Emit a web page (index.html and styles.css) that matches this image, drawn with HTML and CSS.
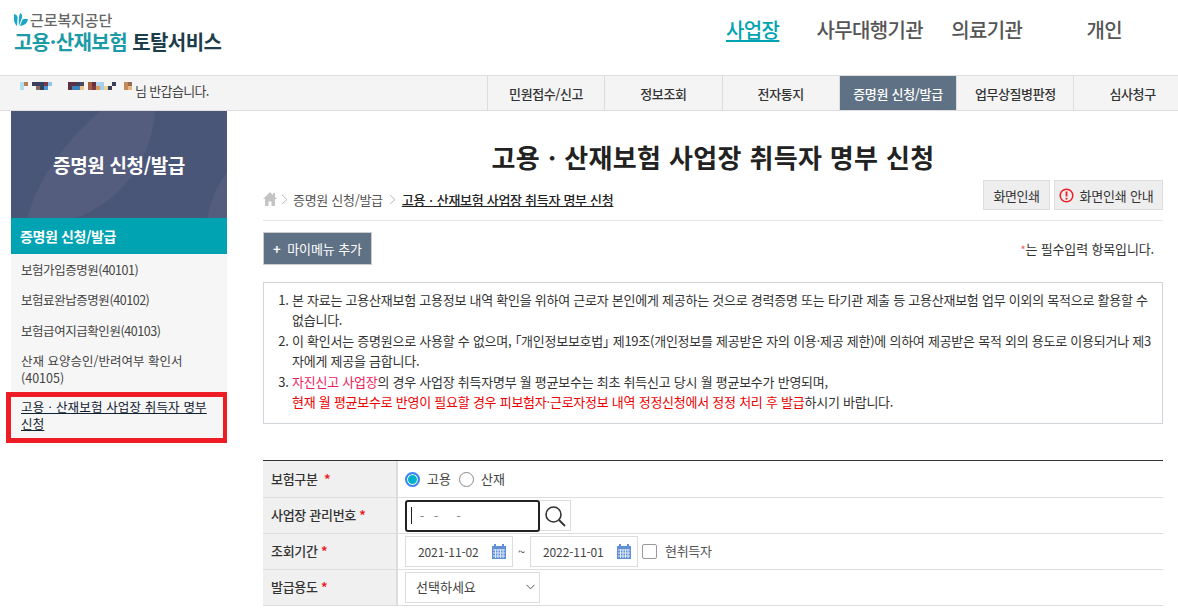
FILE: index.html
```html
<!DOCTYPE html>
<html lang="ko">
<head>
<meta charset="utf-8">
<title>고용·산재보험 토탈서비스</title>
<link rel="stylesheet" href="styles.css">
</head>
<body>
<header class="top">
  <div class="logo">
    <div class="logo-org">
      <svg class="logo-mark" width="14" height="14" viewBox="0 0 14 14"><path d="M0 1c3 .5 4 2.500 3.500 5.500L3 13C1 11 0 9 0 6z" fill="#1aa5c6"/><path d="M6 0c1.800.8 2.500 2.500 2 4.500L5 13C4.500 8 4.800 4 6 0z" fill="#1aa5c6"/><path d="M8.500 6.500c2-1 4-1 5.500-.3C13.500 10 10 12.500 6 13z" fill="#1aa5c6"/></svg>
      <span>근로복지공단</span>
    </div>
    <div class="logo-name"><span class="logo-teal">고용·산재보험</span> 토탈서비스</div>
  </div>
  <nav class="main-nav">
    <a class="nav-a active">사업장</a>
    <a class="nav-b">사무대행기관</a>
    <a class="nav-c">의료기관</a>
    <a class="nav-d">개인</a>
  </nav>
</header>
<div class="bar">
  <div class="greet">
    <svg class="mosaic" width="114" height="12" viewBox="0 0 114 12" shape-rendering="crispEdges"><rect x="0" y="0" width="4" height="8" fill="#b0def2"/><rect x="4" y="0" width="4" height="4" fill="#b87f52"/><rect x="12" y="0" width="8" height="4" fill="#3c3f5c"/><rect x="16" y="4" width="4" height="4" fill="#8c6a55"/><rect x="20" y="0" width="4" height="8" fill="#2f4463"/><rect x="24" y="0" width="4" height="4" fill="#7a3a48"/><rect x="24" y="4" width="4" height="4" fill="#4e97d6"/><rect x="28" y="0" width="4" height="4" fill="#8ec7ec"/><rect x="48" y="0" width="4" height="8" fill="#5c2f44"/><rect x="52" y="0" width="4" height="4" fill="#5c2f44"/><rect x="52" y="4" width="8" height="4" fill="#3b80bf"/><rect x="56" y="0" width="4" height="4" fill="#3c3f5c"/><rect x="60" y="0" width="4" height="4" fill="#4a4a60"/><rect x="60" y="4" width="4" height="4" fill="#eec48a"/><rect x="68" y="0" width="4" height="8" fill="#a65f3e"/><rect x="72" y="0" width="4" height="4" fill="#6a2e3e"/><rect x="72" y="4" width="4" height="4" fill="#7a3a48"/><rect x="76" y="0" width="4" height="4" fill="#b0d8ee"/><rect x="76" y="4" width="4" height="4" fill="#d89a60"/><rect x="80" y="0" width="4" height="8" fill="#a8cfe8"/><rect x="84" y="4" width="4" height="4" fill="#efcf9a"/><rect x="88" y="4" width="4" height="4" fill="#3c3f5c"/><rect x="92" y="0" width="4" height="4" fill="#3c3f5c"/><rect x="104" y="0" width="4" height="8" fill="#c58a5a"/><rect x="108" y="0" width="4" height="4" fill="#9a6a4a"/><rect x="108" y="4" width="4" height="4" fill="#e6b880"/></svg>
    <span class="greet-text">님 반갑습니다.</span>
  </div>
  <nav class="tabs">
    <a class="tab">민원접수/신고</a>
    <a class="tab">정보조회</a>
    <a class="tab">전자통지</a>
    <a class="tab tab-on">증명원 신청/발급</a>
    <a class="tab">업무상질병판정</a>
    <a class="tab">심사청구</a>
  </nav>
</div>
<div class="layout">
  <aside class="side">
    <div class="side-head">
      <svg class="side-art" width="216" height="107" viewBox="0 0 216 107"><path d="M16 107C30 60 60 25 90 0h54c-4 50-34 90-79 107z" fill="#555d7e"/><path d="M196 107c4-17 9-32 20-45v45z" fill="#555d7e"/></svg>
      <span class="side-head-text">증명원 신청/발급</span>
    </div>
    <div class="side-sub">증명원 신청/발급</div>
    <ul class="side-list">
      <li class="side-item">보험가입증명원(40101)</li>
      <li class="side-item">보험료완납증명원(40102)</li>
      <li class="side-item">보험급여지급확인원(40103)</li>
      <li class="side-item side-two">산재 요양승인/반려여부 확인서(40105)</li>
      <li class="side-item side-current"><a>고용ㆍ산재보험 사업장 취득자 명부 신청</a></li>
    </ul>
  </aside>
  <main class="main">
    <h1 class="title">고용ㆍ산재보험 사업장 취득자 명부 신청</h1>
    <div class="crumb-row">
      <div class="crumb">
        <svg width="14" height="14" viewBox="0 0 14 14"><path d="M7 0 0 7h2v7h3.500V9.500h3V14H12V7h2l-2-2V1h-2v2z" fill="#c4c4c4"/></svg>
        <svg class="chev" width="7" height="11" viewBox="0 0 7 11"><path d="M1 1l5 4.500L1 10" fill="none" stroke="#bbb" stroke-width="1"/></svg>
        <span class="crumb-mid">증명원 신청/발급</span>
        <svg class="chev chev2" width="7" height="11" viewBox="0 0 7 11"><path d="M1 1l5 4.500L1 10" fill="none" stroke="#bbb" stroke-width="1"/></svg>
        <span class="crumb-now">고용ㆍ산재보험 사업장 취득자 명부 신청</span>
      </div>
      <div class="print-btns">
        <button class="btn-print">화면인쇄</button>
        <button class="btn-print btn-guide">
          <svg width="15" height="15" viewBox="0 0 15 15"><circle cx="7.500" cy="7.500" r="6.300" fill="none" stroke="#ee1c25" stroke-width="1.500"/><path d="M7.500 3.500v5" stroke="#ee1c25" stroke-width="1.800"/><circle cx="7.500" cy="10.800" r="1" fill="#ee1c25"/></svg>
          화면인쇄 안내
        </button>
      </div>
    </div>
    <div class="tool-row">
      <button class="btn-my"><span class="plus">+</span> 마이메뉴 추가</button>
      <p class="req"><span class="req-star">*</span>는 필수입력 항목입니다.</p>
    </div>
    <ol class="notice">
      <li>본 자료는 고용산재보험 고용정보 내역 확인을 위하여 근로자 본인에게 제공하는 것으로 경력증명 또는 타기관 제출 등 고용산재보험 업무 이외의 목적으로 활용할 수 없습니다.</li>
      <li>이 확인서는 증명원으로 사용할 수 없으며, <span class="law">「개인정보보호법」</span> 제19조(개인정보를 제공받은 자의 이용·제공 제한)에 의하여 제공받은 목적 외의 용도로 이용되거나 제3<br>자에게 제공을 금합니다.</li>
      <li><span class="pink">자진신고 사업장</span>의 경우 사업장 취득자명부 월 평균보수는 최초 취득신고 당시 월 평균보수가 반영되며,<br><span class="red">현재 월 평균보수로 반영이 필요할 경우 피보험자·근로자정보 내역 정정신청에서 정정 처리 후 발급</span>하시기 바랍니다.</li>
    </ol>
    <div class="form">
      <div class="row row-first">
        <div class="label">보험구분 <span class="star star-gap">*</span></div>
        <div class="field">
          <span class="radio radio-on"></span><span class="opt">고용</span>
          <span class="radio"></span><span class="opt">산재</span>
        </div>
      </div>
      <div class="row">
        <div class="label">사업장 관리번호 <span class="star">*</span></div>
        <div class="field">
          <div class="biz-input"><span class="caret"></span><span class="mask">- &nbsp;- &nbsp; &nbsp;-</span></div>
          <button class="search-btn" aria-label="검색">
            <svg width="22" height="22" viewBox="0 0 22 22"><circle cx="9.500" cy="9.500" r="7.500" fill="none" stroke="#333" stroke-width="1.600"/><path d="M15 15l6 6" stroke="#333" stroke-width="1.800"/></svg>
          </button>
        </div>
      </div>
      <div class="row">
        <div class="label">조회기간 <span class="star">*</span></div>
        <div class="field">
          <div class="date">2021-11-02
            <svg class="cal" width="14" height="15" viewBox="0 0 14 15"><rect x="0" y="2" width="14" height="13" fill="#5f8fd6"/><rect x="2" y="0" width="2" height="4" fill="#5f8fd6"/><rect x="10" y="0" width="2" height="4" fill="#5f8fd6"/><path d="M1 6h12M1 9h12M1 12h12M3.500 5v9M6 5v9M8.500 5v9M11 5v9" stroke="#dfe8f7" stroke-width="1"/></svg>
          </div>
          <span class="tilde">~</span>
          <div class="date">2022-11-01
            <svg class="cal" width="14" height="15" viewBox="0 0 14 15"><rect x="0" y="2" width="14" height="13" fill="#5f8fd6"/><rect x="2" y="0" width="2" height="4" fill="#5f8fd6"/><rect x="10" y="0" width="2" height="4" fill="#5f8fd6"/><path d="M1 6h12M1 9h12M1 12h12M3.500 5v9M6 5v9M8.500 5v9M11 5v9" stroke="#dfe8f7" stroke-width="1"/></svg>
          </div>
          <span class="check"></span><span class="check-label">현취득자</span>
        </div>
      </div>
      <div class="row">
        <div class="label">발급용도 <span class="star">*</span></div>
        <div class="field">
          <div class="select">선택하세요
            <svg width="9" height="6" viewBox="0 0 9 6"><path d="M.5.800l4 4 4-4" fill="none" stroke="#555" stroke-width="1"/></svg>
          </div>
        </div>
      </div>
    </div>
  </main>
</div>
</body>
</html>
```
FILE: styles.css
```css
* { box-sizing: border-box; }
html, body { margin: 0; height: 615px; overflow: hidden; background: #fff; }
body { font-family: "Noto Sans CJK KR", "Noto Sans", sans-serif; color: #333; font-size: 13px; }
ul, ol, h1, p { margin: 0; padding: 0; }
button { font-family: inherit; cursor: pointer; }

.top { height: 76px; border-bottom: 1px solid #ddd; display: flex; justify-content: space-between; }
.logo { padding: 12px 0 0 14px; }
.logo-org { display: flex; align-items: center; gap: 2px; font-size: 15px; line-height: 16px; color: #666; font-weight: 500; letter-spacing: -0.1px; }
.logo-name { font-size: 20px; line-height: 26px; margin-top: 1px; font-weight: 700; color: #1d3d4a; letter-spacing: -0.55px; }
.logo-teal { color: #1c9aa6; }
.main-nav { display: flex; font-size: 20px; font-weight: 500; color: #555; height: 59px; align-items: center; letter-spacing: -0.6px; }
.main-nav a { display: block; }
.nav-a { color: #00a3b1; text-decoration: underline; text-underline-offset: 2px; margin-right: 37px; }
.nav-b { margin-right: 28px; }
.nav-c { margin-right: 64px; }
.nav-d { margin-right: 56px; }

.bar { height: 35px; background: #f4f4f4; border-bottom: 1px solid #ddd; display: flex; justify-content: space-between; overflow: hidden; }
.greet { display: flex; align-items: flex-start; padding: 6px 0 0 20px; }
.mosaic { flex: none; width: 114px; }
.greet-text { margin: 0 0 0 1px; font-size: 13px; line-height: 18px; color: #444; letter-spacing: -0.65px; }
.tabs { display: flex; flex: none; width: 691px; border-left: 1px solid #ddd; height: 34px; }
.tab { flex: 0 0 117.300px; border-right: 1px solid #ddd; display: flex; align-items: center; justify-content: center; font-size: 13px; font-weight: 500; color: #333; letter-spacing: -0.4px; }
.tab-on { background: #5f7185; color: #fff; letter-spacing: -0.3px; }

.layout { display: flex; gap: 36px; padding: 0 15px 0 11px; }
.side { flex: 0 0 216px; }
.side-head { position: relative; height: 107px; background: #4a5678; color: #fff; font-size: 19px; font-weight: 700; display: flex; align-items: center; justify-content: center; letter-spacing: -0.35px; }
.side-art { position: absolute; left: 0; top: 0; }
.side-head-text { position: relative; }
.side-sub { height: 36px; background: #00a3b1; color: #fff; font-size: 14px; font-weight: 700; line-height: 36px; padding-left: 9px; letter-spacing: -0.4px; }
.side-list { list-style: none; background: #f6f6f6; }
.side-item { font-size: 12.500px; line-height: 17px; padding: 7px 10px 6px; color: #444; letter-spacing: -0.45px; height: 30.300px; }
.side-two { height: 47px; padding-right: 20px; letter-spacing: 0; }
.side-current { margin-left: -5px; border: 5px solid #ee1c25; border-right-width: 4px; height: 51px; padding: 1px 5px 0 10px; color: #123; letter-spacing: 0.15px; word-break: keep-all; }
.side-current a { text-decoration: underline; }

.main { flex: 0 0 900px; }
.title { text-align: center; font-size: 26px; line-height: 36px; font-weight: 700; color: #222; padding-top: 28px; margin-bottom: 5px; letter-spacing: 0.35px; }
.crumb-row { display: flex; justify-content: space-between; align-items: flex-start; height: 41px; border-bottom: 1px solid #e5e5e5; }
.crumb { display: flex; align-items: center; gap: 4px; font-size: 13px; color: #555; letter-spacing: -0.3px; height: 20px; margin-top: 7px; padding-top: 4px; }
.crumb-mid { margin-left: 1px; }
.chev2 { margin: 0 2px; }
.crumb-now { color: #222; font-weight: 500; text-decoration: underline; margin-left: 0; }
.print-btns { display: flex; gap: 4px; }
.btn-print { height: 30px; border: 1px solid #ddd; background: #eee; font-size: 13px; color: #333; padding: 0; width: 67px; letter-spacing: -0.4px; display: flex; align-items: center; justify-content: center; gap: 5px; white-space: nowrap; }
.btn-guide { width: 109px; padding-right: 4px; letter-spacing: -0.2px; }

.tool-row { display: flex; justify-content: space-between; align-items: center; padding-top: 10px; height: 44px; }
.btn-my { width: 109px; height: 33px; background: #5f7185; border: 1px solid #ccc; color: #fff; font-size: 13px; padding: 0; letter-spacing: -0.1px; }
.plus { font-weight: 700; margin-right: 3px; }
.req { font-size: 13px; color: #333; padding: 0 9px 0 0; letter-spacing: -0.15px; }
.req-star { color: #ee5566; font-size: 11px; }

.notice { margin-top: 17px; height: 142px; border: 1px solid #d0d5da; padding: 7px 6px 0 28px; font-size: 13px; line-height: 20.300px; color: #333; letter-spacing: -0.25px; }
.notice li { margin-bottom: 0.500px; }
.law { font-feature-settings: "palt"; }
.pink { color: #ee1c60; }
.red { color: #ee0000; }

.form { margin-top: 36px; border-top: 1px solid #333; }
.row { display: flex; height: 36px; border-bottom: 1.500px solid #ddd; }
.row-first { height: 37px; }
.label { flex: 0 0 135px; background: #f0f0f0; border-right: 2px solid #ddd; display: flex; align-items: center; padding: 0 0 2px 8px; font-size: 13px; font-weight: 500; color: #333; letter-spacing: -0.3px; white-space: pre; }
.star { color: #ee1c25; font-weight: 700; }
.star-gap { margin-left: 3px; }
.field { display: flex; align-items: center; padding-left: 7px; font-size: 13px; }
.radio { width: 15px; height: 15px; border-radius: 50%; border: 1px solid #888; background: #fff; flex: none; display: block; }
.radio-on { border: 2px solid #3b82f6; box-shadow: inset 0 0 0 1px #fff; background: #00b2c8; }
.opt { margin: 0 8px 2px 7px; color: #444; }
.biz-input { width: 135px; height: 32px; border: 2px solid #222; border-radius: 3px; display: flex; align-items: center; padding-left: 4px; gap: 8px; color: #777; }
.caret { width: 1px; height: 17px; background: #222; display: block; }
.mask { font-size: 12px; letter-spacing: 1px; }
.search-btn { width: 31px; height: 31px; border: 1px solid #ddd; border-left: 0; background: #fff; padding: 0; display: flex; align-items: center; justify-content: center; }
.date { width: 108px; height: 31px; border: 1px solid #ddd; display: flex; align-items: center; justify-content: space-between; padding: 0 6px 1px 12px; font-size: 12px; color: #444; letter-spacing: -0.1px; }
.tilde { width: 17px; text-align: center; color: #555; }
.check { width: 15px; height: 15px; border: 1px solid #999; border-radius: 2px; margin: 0 8px 0 4px; display: block; }
.check-label { font-size: 13px; color: #555; letter-spacing: -0.3px; margin-bottom: 2px; }
.select { width: 135px; height: 31px; border: 1px solid #ddd; display: flex; align-items: center; justify-content: space-between; padding: 0 4px 2px 10px; font-size: 13px; color: #444; }
```
